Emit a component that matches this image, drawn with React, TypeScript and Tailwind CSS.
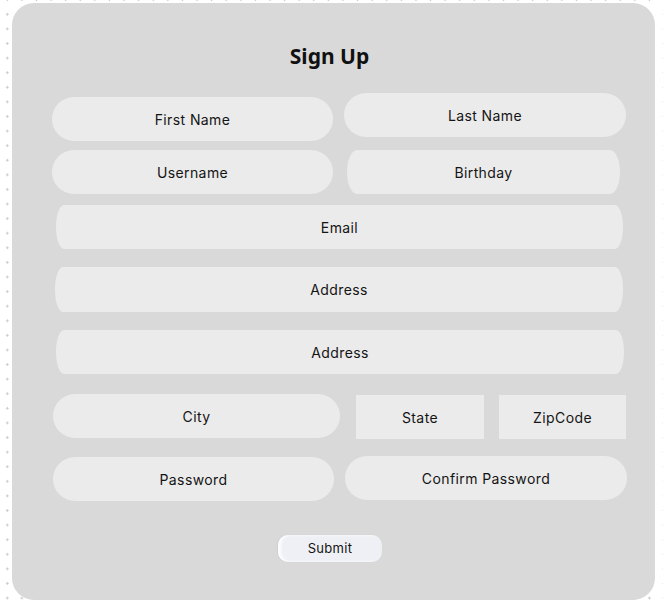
import React from "react";

const pill = "flex items-center justify-center bg-[#ebebeb] text-[14px] tracking-[0.4px] text-[#141414] rounded-[22px]";
const oval = "flex items-center justify-center bg-[#ebebeb] text-[14px] tracking-[0.4px] text-[#141414] rounded-[8px_/_22px]";
const box = "flex items-center justify-center bg-[#ebebeb] text-[14px] tracking-[0.4px] text-[#141414]";

export default function App() {
  return (
    <div
      className="h-[610px] w-full overflow-hidden bg-white bg-[radial-gradient(circle,#c9ccd4_1px,transparent_1.3px)] bg-[length:14.6px_14.6px] bg-[position:0px_7px] pl-[12px] pt-[3px]"
      style={{ fontFamily: "Inter, 'Noto Sans', sans-serif" }}
    >
      <form
        className="flex h-[597px] w-[643px] flex-col rounded-[22px] bg-[#d9d9d9]"
        onSubmit={(e) => e.preventDefault()}
      >
        <h1
          className="mt-[39px] pr-[8px] text-center text-[21px] font-bold leading-[28px] text-[#111]"
          style={{ fontFamily: "'Noto Sans', sans-serif" }}
        >
          Sign Up
        </h1>

        {/* name row */}
        <div className="mt-[23px] flex items-start pl-[40px]">
          <div className={`${pill} mt-[4px] h-[44px] w-[281px]`}>First Name</div>
          <div className={`${pill} ml-[11px] h-[44px] w-[282px]`}>Last Name</div>
        </div>

        <div className="mt-[9px] flex items-start pl-[40px]">
          <div className={`${pill} h-[44px] w-[281px]`}>Username</div>
          <div className={`${box} ml-[14px] h-[44px] w-[273px] rounded-[10px_/_22px]`}>Birthday</div>
        </div>

        <div className={`${oval} ml-[44px] mt-[11px] h-[44px] w-[567px]`}>Email</div>
        <div className={`${oval} ml-[43px] mt-[18px] h-[45px] w-[568px]`}>Address</div>
        <div className={`${oval} ml-[44px] mt-[18px] h-[44px] w-[568px]`}>Address</div>

        <div className="mt-[20px] flex items-start pl-[41px]">
          <div className={`${pill} h-[44px] w-[287px]`}>City</div>
          <div className={`${box} ml-[16px] mt-[1px] h-[44px] w-[128px]`}>State</div>
          <div className={`${box} ml-[15px] mt-[1px] h-[44px] w-[127px]`}>ZipCode</div>
        </div>

        <div className="mt-[17px] flex items-start pl-[41px]">
          <div className={`${pill} mt-[1px] h-[44px] w-[281px]`}>Password</div>
          <div className={`${pill} ml-[11px] h-[44px] w-[282px]`}>Confirm Password</div>
        </div>

        <button
          type="submit"
          className="ml-[266px] mt-[34px] flex h-[27px] w-[104px] items-center justify-center rounded-[10px] bg-[#eef0f5] text-[13px] tracking-[0.3px] text-[#141414] shadow-[inset_3px_0_3px_rgba(255,255,255,0.9),-1px_0_1px_rgba(190,194,204,0.4)]"
        >
          Submit
        </button>
      </form>
    </div>
  );
}
